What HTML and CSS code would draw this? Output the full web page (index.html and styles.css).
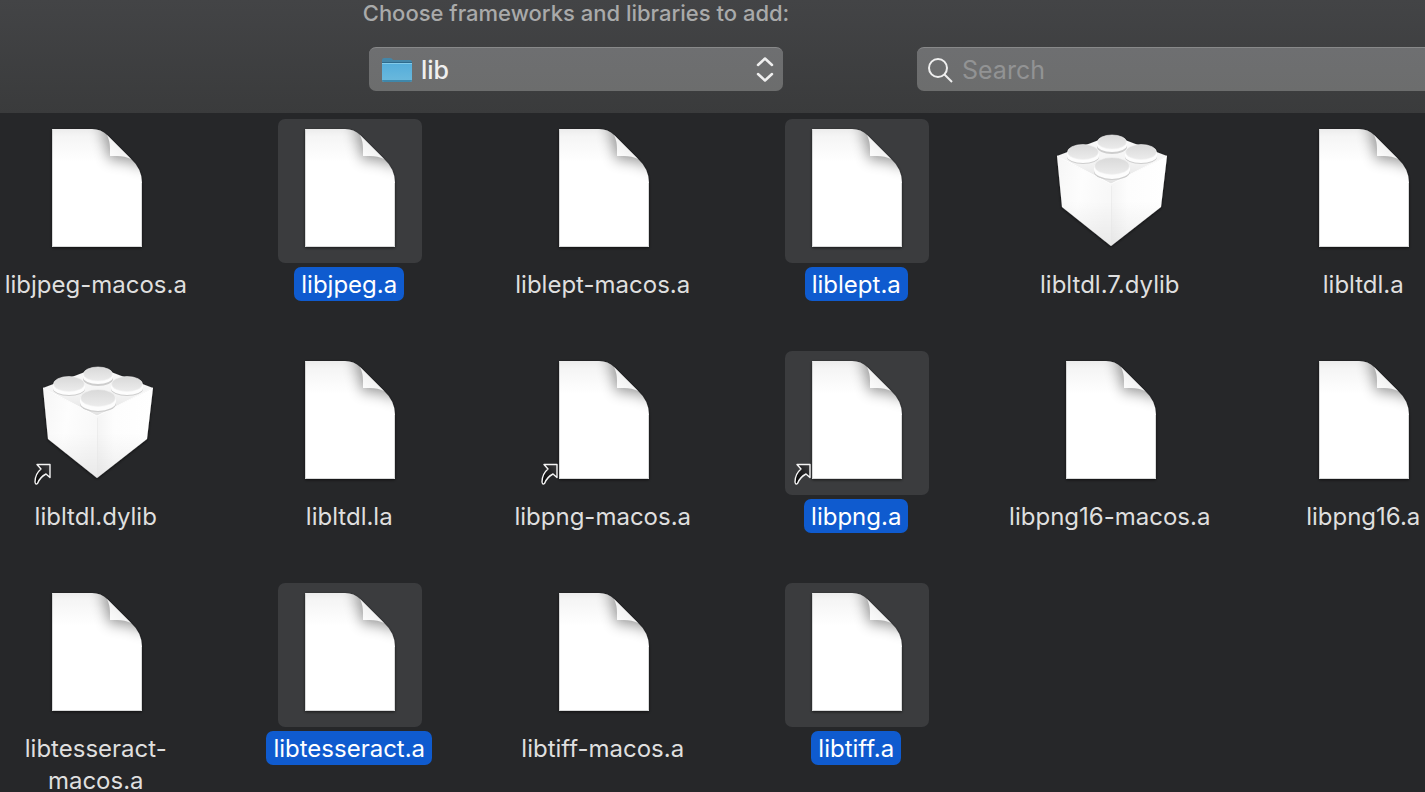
FILE: index.html
```html
<!DOCTYPE html>
<html lang="en">
<head>
<meta charset="utf-8">
<title>Choose frameworks and libraries to add</title>
<link rel="stylesheet" href="styles.css">
</head>
<body>
<svg class="defs" aria-hidden="true">
  <defs>
    <linearGradient id="paper" x1="0" y1="0" x2="0" y2="1">
      <stop offset="0" stop-color="#ececec"/><stop offset=".06" stop-color="#f5f5f5"/><stop offset=".28" stop-color="#fff"/>
    </linearGradient>
    <linearGradient id="fold" x1="0" y1="1" x2=".5" y2=".4">
      <stop offset="0" stop-color="#fff"/><stop offset="1" stop-color="#f0f0f0"/>
    </linearGradient>
    <linearGradient id="brick-top" x1="0" y1="0" x2="0" y2="1">
      <stop offset="0" stop-color="#fafafa"/><stop offset=".5" stop-color="#f4f4f4"/><stop offset="1" stop-color="#e2e2e2"/>
    </linearGradient>
    <linearGradient id="brick-left" x1="0" y1="0" x2="1" y2=".3">
      <stop offset="0" stop-color="#f6f6f6"/><stop offset=".5" stop-color="#fdfdfd"/><stop offset="1" stop-color="#f8f8f8"/>
    </linearGradient>
    <linearGradient id="brick-right" x1="0" y1="0" x2="1" y2="0">
      <stop offset="0" stop-color="#f4f4f4"/><stop offset=".3" stop-color="#fdfdfd"/><stop offset="1" stop-color="#fff"/>
    </linearGradient>
    <linearGradient id="brick-shade" x1="0" y1="0" x2="0" y2="1">
      <stop offset=".5" stop-color="#000" stop-opacity="0"/><stop offset="1" stop-color="#000" stop-opacity=".06"/>
    </linearGradient>
    <linearGradient id="stud" x1="0" y1="0" x2="0" y2="1">
      <stop offset="0" stop-color="#d9d9d9"/><stop offset="1" stop-color="#ececec"/>
    </linearGradient>
    <linearGradient id="arrow" x1="0" y1="1" x2="1" y2="0">
      <stop offset="0" stop-color="#000"/><stop offset="1" stop-color="#3c3c3e"/>
    </linearGradient>
    <linearGradient id="folder-front" x1="0" y1="0" x2="0" y2="1">
      <stop offset="0" stop-color="#54addb"/><stop offset="1" stop-color="#6bb9dc"/>
    </linearGradient>
    <filter id="soft" x="-100%" y="-100%" width="300%" height="300%"><feGaussianBlur stdDeviation="7"/></filter>
    <filter id="drop" x="-20%" y="-20%" width="140%" height="140%"><feDropShadow dx="0" dy="1" stdDeviation="1.5" flood-color="#000" flood-opacity=".6"/></filter>
    <clipPath id="page-clip"><path d="M27 10H67Q76 10 82 16L106 40Q117 50 117 64V128H27Z"/></clipPath>
  </defs>
  <symbol id="document" viewBox="0 0 144 144">
    <path filter="url(#drop)" fill="url(#paper)" d="M27 10H67Q76 10 82 16L106 40Q117 50 117 64V128H27Z"/>
    <g clip-path="url(#page-clip)">
      <path filter="url(#soft)" fill="#000" opacity=".4" d="M76 6H88L122 38L120 50Q106 40 84 41Q82 25 78 17Z"/>
    </g>
    <path fill="url(#fold)" d="M82 16Q85 22 85 30V37H92Q100 37 106 40Z"/>
    <path fill="none" stroke="#bfc1c1" stroke-opacity=".6" d="M27.500 10.500V127.500H116.500V64"/>
  </symbol>
  <symbol id="brick" viewBox="0 0 144 144">
    <g filter="url(#drop)">
      <path fill="url(#brick-top)" d="M18 37L60 21Q72 17 86 21L128 37L72 66Z"/>
      <path fill="url(#brick-left)" d="M18 37L72 65V127L23 88Z"/>
      <path fill="url(#brick-right)" d="M128 37L72 65V127L122 88Z"/>
    </g>
    <path fill="url(#brick-shade)" d="M18 37L72 65L128 37L122 88L72 127L23 88Z"/>
    <path fill="none" stroke="#fff" d="M18 37L72 65L128 37"/>
    <path fill="none" stroke="#e8e8e8" stroke-opacity=".6" d="M72.500 67V125"/>
    <g fill="#cdcdcd">
      <path d="M58 23V28A15 7 0 0 0 88 28V23Z"/><path d="M28 34V38A16 7 0 0 0 60 38V34Z"/>
      <path d="M86 34V38A16 7 0 0 0 118 38V34Z"/><path d="M55 47V53A18 8 0 0 0 91 53V47Z"/>
    </g>
    <g fill="#fdfdfd">
      <path d="M58 22V26A15 7 0 0 0 88 26V22Z"/><path d="M28 33V37A16 7 0 0 0 60 37V33Z"/>
      <path d="M86 33V37A16 7 0 0 0 118 37V33Z"/><path d="M55 46V51A18 9 0 0 0 91 51V46Z"/>
    </g>
    <g fill="url(#stud)" stroke="#f3f3f3" stroke-width=".6">
      <ellipse cx="73" cy="23" rx="14.500" ry="7"/><ellipse cx="44" cy="33" rx="15.500" ry="7.500"/>
      <ellipse cx="102" cy="33" rx="15.500" ry="7.500"/><ellipse cx="73" cy="47" rx="17.500" ry="8.500"/>
    </g>
  </symbol>
  <symbol id="alias" viewBox="0 0 144 144">
    <path fill="url(#arrow)" stroke="#f4f4f4" stroke-width="1.400" stroke-linejoin="round" d="M12 113.500H25V126.500L21 123Q15 126 12.500 132.500Q10.500 134 10 131Q10 123 16 118Z"/>
  </symbol>
</svg>

<main class="panel">
  <header class="toolbar">
    <label class="title" for="location">Choose frameworks and libraries to add:</label>
    <div class="field location">
      <svg class="folder" viewBox="0 0 32 28" aria-hidden="true">
        <path fill="#4486a8" d="M1 4Q1 2 3 2H9Q11 2 12 4H29Q31 4 31 6V20H1Z"/>
        <path fill="#2e6a8c" d="M1 6H31V8H1Z"/>
        <path fill="url(#folder-front)" d="M1 7H31V24Q31 26 29 26H3Q1 26 1 24Z"/>
        <path fill="#83cbea" d="M1 7H31V8H1Z"/><path fill="#3f87aa" d="M1 24H31Q31 26 29 26H3Q1 26 1 24Z"/>
      </svg>
      <select id="location"><option>lib</option></select>
      <svg class="chevrons" viewBox="0 0 18 26" aria-hidden="true"><path d="M2 8L9 1.500L16 8M2 17L9 23.500L16 17"/></svg>
    </div>
    <div class="field search">
      <svg class="glass" viewBox="0 0 28 28" aria-hidden="true"><circle cx="12" cy="12" r="9"/><path d="M18.500 18.500L26 26"/></svg>
      <input type="search" placeholder="Search" aria-label="Search">
    </div>
  </header>

  <section class="files" aria-label="Files">
    <button class="file"><svg class="tile"><use href="#document"/></svg><span class="name">libjpeg-macos.a</span></button>
    <button class="file selected" aria-pressed="true"><svg class="tile"><use href="#document"/></svg><span class="name">libjpeg.a</span></button>
    <button class="file"><svg class="tile"><use href="#document"/></svg><span class="name">liblept-macos.a</span></button>
    <button class="file selected" aria-pressed="true"><svg class="tile"><use href="#document"/></svg><span class="name">liblept.a</span></button>
    <button class="file"><svg class="tile"><use href="#brick"/></svg><span class="name">libltdl.7.dylib</span></button>
    <button class="file"><svg class="tile"><use href="#document"/></svg><span class="name">libltdl.a</span></button>

    <button class="file"><svg class="tile"><use href="#brick"/><use href="#alias"/></svg><span class="name">libltdl.dylib</span></button>
    <button class="file"><svg class="tile"><use href="#document"/></svg><span class="name">libltdl.la</span></button>
    <button class="file"><svg class="tile"><use href="#document"/><use href="#alias"/></svg><span class="name">libpng-macos.a</span></button>
    <button class="file selected" aria-pressed="true"><svg class="tile"><use href="#document"/><use href="#alias"/></svg><span class="name">libpng.a</span></button>
    <button class="file"><svg class="tile"><use href="#document"/></svg><span class="name">libpng16-macos.a</span></button>
    <button class="file"><svg class="tile"><use href="#document"/></svg><span class="name">libpng16.a</span></button>

    <button class="file"><svg class="tile"><use href="#document"/></svg><span class="name">libtesseract-macos.a</span></button>
    <button class="file selected" aria-pressed="true"><svg class="tile"><use href="#document"/></svg><span class="name">libtesseract.a</span></button>
    <button class="file"><svg class="tile"><use href="#document"/></svg><span class="name">libtiff-macos.a</span></button>
    <button class="file selected" aria-pressed="true"><svg class="tile"><use href="#document"/></svg><span class="name">libtiff.a</span></button>
  </section>
</main>
</body>
</html>
```
FILE: styles.css
```css
* {
  box-sizing: border-box;
}

body {
  margin: 0;
  background: #262729;
  color: #dfdfdf;
  font-family: Inter, "Liberation Sans", sans-serif;
  font-size: 24px;
}

.defs {
  position: absolute;
  width: 0;
  height: 0;
}

.panel {
  height: 100vh;
  overflow: hidden;
}

.toolbar {
  display: grid;
  grid-template-columns: minmax(0, 369fr) minmax(0, 414fr) minmax(0, 134fr) minmax(0, 508fr);
  row-gap: 20px;
  padding-bottom: 22px;
  background: linear-gradient(#434446, #3a3b3c);
}

.title {
  grid-column: 2;
  justify-self: center;
  color: #a9aaaa;
  font-size: 22px;
  font-weight: 500;
  line-height: 27px;
  white-space: nowrap;
}

.field {
  display: flex;
  align-items: center;
  height: 44px;
  border-top: 1px solid #88898a;
  border-radius: 7px;
  background: linear-gradient(#6e6f71, #6c6d6d);
}

.location {
  grid-column: 2;
  grid-row: 2;
  padding: 0 9px 0 12px;
}

.folder {
  width: 32px;
  height: 28px;
}

.location select,
.search input {
  flex: 1;
  min-width: 0;
  height: 100%;
  padding: 0;
  border: 0;
  outline: 0;
  background: none;
  color: #efefef;
  font: inherit;
  font-size: 25px;
  appearance: none;
}

.location select {
  margin-left: 8px;
  font-weight: 500;
}

.chevrons {
  width: 18px;
  height: 26px;
  fill: none;
  stroke: #efefef;
  stroke-width: 2.500;
  stroke-linecap: round;
  stroke-linejoin: round;
}

.search {
  grid-column: 4;
  grid-row: 2;
  padding-left: 9px;
  border-top-right-radius: 0;
  border-bottom-right-radius: 0;
}

.glass {
  width: 28px;
  height: 28px;
  fill: none;
  stroke: #efefef;
  stroke-width: 2;
}

.search input {
  margin-left: 8px;
}

.search input::placeholder {
  color: #929394;
  opacity: 1;
}

.files {
  display: grid;
  grid-template-columns: repeat(6, 1fr);
  grid-auto-rows: 232px;
  margin: 0 -66px 0 -30px;
  padding-top: 6px;
}

.file {
  display: flex;
  flex-direction: column;
  align-items: center;
  gap: 4px;
  padding: 0;
  border: 0;
  background: none;
  color: inherit;
  font: inherit;
}

.tile {
  flex: none;
  width: 144px;
  height: 144px;
  border-radius: 7px;
}

.name {
  max-width: 220px;
  margin-right: 2px;
  padding: 2px 7px 0;
  border-radius: 7px;
  line-height: 32px;
}

.selected .tile {
  background: #3b3c3e;
}

.selected .name {
  background: #0f5bcf;
  color: #fff;
}
```
